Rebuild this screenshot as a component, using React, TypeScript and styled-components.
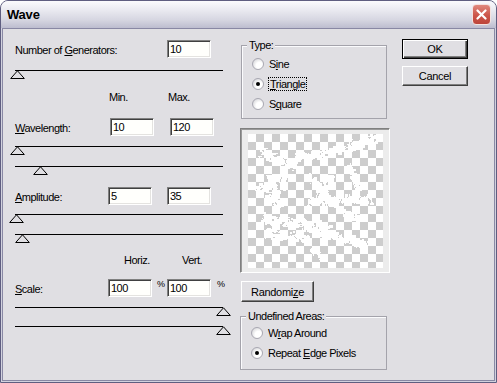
import React, { useMemo } from "react";
import styled, { createGlobalStyle } from "styled-components";

const GlobalStyle = createGlobalStyle`
  html, body {
    margin: 0;
    padding: 0;
    background: #ffffff;
  }
`;

const Window = styled.div`
  width: 497px;
  height: 383px;
  box-sizing: border-box;
  display: flex;
  flex-direction: column;
  border: 1px solid #5f5e80;
  border-radius: 8px 8px 0 0;
  background: #d2d2de;
  overflow: hidden;
  font-family: "Liberation Sans", Arial, sans-serif;
  font-size: 11px;
  letter-spacing: -0.5px;
  color: #000;
`;

const TitleBar = styled.div`
  height: 27px;
  flex: none;
  display: flex;
  align-items: center;
  justify-content: space-between;
  padding: 0 5px 0 6px;
  background: linear-gradient(#fbfbfd 0%, #e9e9f0 35%, #d6d6e1 70%, #bdbdcf 100%);
`;

const Title = styled.span`
  font-size: 13px;
  font-weight: bold;
  letter-spacing: -0.2px;
`;

const CloseButton = styled.div`
  width: 19px;
  height: 21px;
  box-sizing: border-box;
  border: 1px solid #f4e2df;
  border-radius: 4px;
  background: linear-gradient(#e0897d, #cc5549 55%, #bd453b);
  display: flex;
  align-items: center;
  justify-content: center;
`;

const Body = styled.div`
  flex: 1;
  margin: 0 1px 1px 1px;
  border: 1px solid #8988a4;
  background: #e0dfe3;
  display: flex;
  align-items: flex-start;
`;

const LeftCol = styled.div`
  width: 220px;
  padding: 11px 0 0 12px;
  display: flex;
  flex-direction: column;
`;

const RightCol = styled.div`
  width: 149px;
  margin-left: 6px;
  padding-top: 16px;
  display: flex;
  flex-direction: column;
`;

const ButtonCol = styled.div`
  margin-left: 12px;
  padding-top: 10px;
  display: flex;
  flex-direction: column;
  gap: 7px;
`;

const FieldRow = styled.div<{ $top?: number }>`
  display: grid;
  grid-template-columns: 93px 44px 15px 44px 12px;
  align-items: center;
  height: 18px;
  margin-top: ${(p) => p.$top ?? 0}px;
`;

const HeaderRow = styled(FieldRow)`
  height: 14px;
`;

const Label = styled.span<{ $span?: number }>`
  grid-column: span ${(p) => p.$span ?? 1};
  padding-top: 1px;
`;

const ColText = styled.span<{ $col: number; $indent?: number }>`
  grid-column: ${(p) => p.$col};
  padding-left: ${(p) => p.$indent ?? 1}px;
`;

const Percent = styled.span<{ $col: number; $indent: number }>`
  grid-column: ${(p) => p.$col};
  align-self: start;
  padding-left: ${(p) => p.$indent}px;
  font-size: 9px;
  line-height: 11px;
`;

const Key = styled.u`
  text-decoration: underline;
  text-underline-offset: 1px;
`;

const NumberBox = styled.input<{ $col: number; $shift?: number }>`
  grid-column: ${(p) => p.$col};
  margin-left: ${(p) => p.$shift ?? 0}px;
  width: 44px;
  height: 18px;
  box-sizing: border-box;
  padding: 0 2px;
  border: 1px solid;
  border-color: #808080 #ffffff #ffffff #808080;
  box-shadow: inset 1px 1px #404040, inset -1px -1px #e4e3e0;
  background: #fffffc;
  font-family: inherit;
  font-size: 11px;
  letter-spacing: -0.5px;
  color: #000;
  outline: none;
`;

const SliderBox = styled.div<{ $top: number }>`
  position: relative;
  width: 208px;
  height: 9px;
  margin-top: ${(p) => p.$top}px;
  border-top: 1px solid #000;
  box-sizing: border-box;
`;

const Thumb = styled.svg<{ $at: number }>`
  position: absolute;
  top: -1px;
  left: ${(p) => p.$at - 7.5}px;
`;

const Slider = ({ top, at }: { top: number; at: number }) => (
  <SliderBox $top={top}>
    <Thumb $at={at} width="15" height="9" viewBox="0 0 15 9">
      <polygon points="7.5,0.8 0.7,8.5 14.3,8.5" fill="none" stroke="#000" strokeWidth="1" />
    </Thumb>
  </SliderBox>
);

const Group = styled.div<{ $w: number; $h: number; $top?: number; $shift?: number; $pad: number }>`
  position: relative;
  box-sizing: border-box;
  width: ${(p) => p.$w}px;
  height: ${(p) => p.$h}px;
  margin-top: ${(p) => p.$top ?? 0}px;
  margin-left: ${(p) => p.$shift ?? 0}px;
  padding: ${(p) => p.$pad}px 0 0 10px;
  border: 1px solid #a4a3ab;
  box-shadow: inset 1px 1px #fbfbfd;
`;

const Legend = styled.span`
  position: absolute;
  top: -7px;
  left: 5px;
  padding: 0 2px;
  line-height: 13px;
  background: #e0dfe3;
`;

const RadioRow = styled.div`
  display: flex;
  align-items: center;
  gap: 5px;
  height: 20px;
`;

const RadioDot = styled.span<{ $on?: boolean }>`
  position: relative;
  width: 12px;
  height: 12px;
  box-sizing: border-box;
  border-radius: 50%;
  border: 1px solid #a9a8b2;
  background: radial-gradient(circle at 65% 65%, #ffffff 35%, #e6e6e8 65%, #c3c3ca 100%);
  &::after {
    content: "";
    display: ${(p) => (p.$on ? "block" : "none")};
    position: absolute;
    left: 3px;
    top: 3px;
    width: 4px;
    height: 4px;
    border-radius: 50%;
    background: #000;
  }
`;

const Focus = styled.span`
  outline: 1px dotted #000;
  outline-offset: 0;
  padding: 0 1px;
`;

const Radio = ({ on, focus, children }: { on?: boolean; focus?: boolean; children: React.ReactNode }) => (
  <RadioRow>
    <RadioDot $on={on} />
    {focus ? <Focus>{children}</Focus> : <span>{children}</span>}
  </RadioRow>
);

const Preview = styled.div`
  margin: 9px 0 0 -1px;
  width: 150px;
  height: 145px;
  box-sizing: border-box;
  border: 1px solid;
  border-color: #808080 #ffffff #ffffff #808080;
  box-shadow: inset 1px 1px #9a9a9a;
  background: #ececec;
  display: flex;
  align-items: center;
  justify-content: center;
`;

const Checker = styled.div`
  width: 135px;
  height: 134px;
  background-color: #ffffff;
  background-image:
    linear-gradient(45deg, #cdcdcd 25%, transparent 25%, transparent 75%, #cdcdcd 75%),
    linear-gradient(45deg, #cdcdcd 25%, transparent 25%, transparent 75%, #cdcdcd 75%);
  background-size: 16px 16px;
  background-position: 0 0, 8px 8px;
`;

const Button = styled.button<{ $w: number; $h: number; $default?: boolean; $top?: number }>`
  width: ${(p) => p.$w}px;
  height: ${(p) => p.$h}px;
  margin-top: ${(p) => p.$top ?? 0}px;
  padding: 0;
  box-sizing: border-box;
  background: #e0dfe3;
  font-family: inherit;
  font-size: 11px;
  letter-spacing: -0.3px;
  color: #000;
  border: 1px solid;
  border-color: ${(p) => (p.$default ? "#000" : "#ffffff #404040 #404040 #ffffff")};
  box-shadow: ${(p) =>
    p.$default
      ? "inset 1px 1px #ffffff, inset -1px -1px #404040, inset -2px -2px #808080"
      : "inset -1px -1px #808080"};
`;

// white patches of the wave preview, scattered along a few strokes
const strokes: [number, number, number, number, number][] = [
  [9, 16, 46, 31, 10],
  [46, 24, 93, 14, 9],
  [93, 14, 129, 3, 10],
  [33, 34, 36, 54, 6],
  [59, 41, 86, 71, 8],
  [83, 41, 69, 64, 7],
  [59, 67, 123, 64, 9],
  [9, 51, 33, 71, 8],
  [13, 84, 83, 94, 12],
  [16, 97, 59, 104, 9],
  [69, 97, 119, 111, 10],
  [93, 77, 113, 87, 8],
  [63, 114, 76, 124, 7],
  [20, 40, 28, 60, 5],
  [100, 30, 110, 55, 5],
];

const seeded = (seed: number) => {
  let s = seed;
  return () => {
    s = (s * 1664525 + 1013904223) >>> 0;
    return s / 4294967296;
  };
};

const WaveNoise = () => {
  const specks = useMemo(() => {
    const rnd = seeded(11);
    const out: { x: number; y: number; w: number; h: number }[] = [];
    strokes.forEach(([x1, y1, x2, y2, spread]) => {
      const len = Math.hypot(x2 - x1, y2 - y1);
      const nx = -(y2 - y1) / len;
      const ny = (x2 - x1) / len;
      const n = Math.round(len * 2.8);
      for (let i = 0; i < n; i++) {
        const t = rnd();
        const j = (rnd() - 0.5) * spread * (0.4 + rnd() * 0.8);
        out.push({
          x: Math.round(x1 + (x2 - x1) * t + nx * j),
          y: Math.round(y1 + (y2 - y1) * t + ny * j),
          w: 1 + Math.floor(rnd() * 4),
          h: 1 + Math.floor(rnd() * 3),
        });
      }
    });
    return out;
  }, []);
  return (
    <svg width="135" height="134" shapeRendering="crispEdges">
      {specks.map((s, i) => (
        <rect key={i} x={s.x} y={s.y} width={s.w} height={s.h} fill="#ffffff" />
      ))}
    </svg>
  );
};

const App = () => {
  return (
    <>
      <GlobalStyle />
      <Window>
        <TitleBar>
          <Title>Wave</Title>
          <CloseButton>
            <svg width="11" height="11" viewBox="0 0 11 11">
              <path d="M1.5 1.5 L9.5 9.5 M9.5 1.5 L1.5 9.5" stroke="#fff" strokeWidth="2.2" strokeLinecap="round" />
            </svg>
          </CloseButton>
        </TitleBar>
        <Body>
          <LeftCol>
            <FieldRow>
              <Label $span={3}>
                Number of <Key>G</Key>enerators:
              </Label>
              <NumberBox $col={4} readOnly value="10" />
            </FieldRow>
            <Slider top={12} at={2.5} />

            <HeaderRow $top={11}>
              <ColText $col={2}>Min.</ColText>
              <ColText $col={4}>Max.</ColText>
            </HeaderRow>
            <FieldRow $top={14}>
              <Label>
                <Key>W</Key>avelength:
              </Label>
              <NumberBox $col={2} $shift={2} readOnly value="10" />
              <NumberBox $col={4} $shift={3} readOnly value="120" />
            </FieldRow>
            <Slider top={10} at={2.5} />
            <Slider top={11} at={25.5} />

            <FieldRow $top={12}>
              <Label>
                <Key>A</Key>mplitude:
              </Label>
              <NumberBox $col={2} readOnly value="5" />
              <NumberBox $col={4} readOnly value="35" />
            </FieldRow>
            <Slider top={9} at={1.5} />
            <Slider top={11} at={7.5} />

            <HeaderRow $top={10}>
              <ColText $col={2} $indent={16}>
                Horiz.
              </ColText>
              <ColText $col={4} $indent={15}>
                Vert.
              </ColText>
            </HeaderRow>
            <FieldRow $top={12}>
              <Label>
                <Key>S</Key>cale:
              </Label>
              <NumberBox $col={2} readOnly value="100" />
              <Percent $col={3} $indent={5}>
                %
              </Percent>
              <NumberBox $col={4} readOnly value="100" />
              <Percent $col={5} $indent={6}>
                %
              </Percent>
            </FieldRow>
            <Slider top={10} at={208} />
            <Slider top={10} at={208} />
          </LeftCol>

          <RightCol>
            <Group $w={146} $h={74} $pad={8}>
              <Legend>Type:</Legend>
              <Radio>
                S<Key>i</Key>ne
              </Radio>
              <Radio on focus>
                <Key>T</Key>riangle
              </Radio>
              <Radio>
                S<Key>q</Key>uare
              </Radio>
            </Group>
            <Preview>
              <Checker>
                <WaveNoise />
              </Checker>
            </Preview>
            <Button $w={73} $h={21} $top={8}>
              Randomi<Key>z</Key>e
            </Button>
            <Group $w={147} $h={54} $top={14} $shift={-1} $pad={6}>
              <Legend>Undefined Areas:</Legend>
              <Radio>
                W<Key>r</Key>ap Around
              </Radio>
              <Radio on>
                Repeat <Key>E</Key>dge Pixels
              </Radio>
            </Group>
          </RightCol>

          <ButtonCol>
            <Button $w={66} $h={20} $default>
              OK
            </Button>
            <Button $w={66} $h={20}>
              Cancel
            </Button>
          </ButtonCol>
        </Body>
      </Window>
    </>
  );
};

export default App;
